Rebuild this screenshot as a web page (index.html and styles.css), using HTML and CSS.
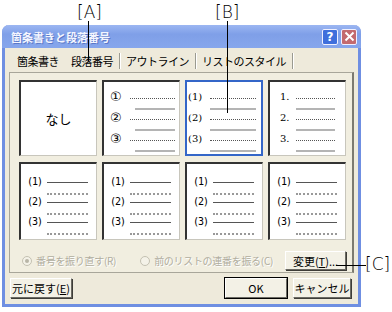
FILE: index.html
```html
<!DOCTYPE html>
<html lang="ja">
<head>
    <meta charset="UTF-8">
    <title>箇条書きと段落番号</title>
    <link rel="stylesheet" href="styles.css">
</head>
<body>

    <div class="dialog">
        <div class="titlebar">
            <span class="title">箇条書きと段落番号</span>
            <span class="tb-btn help">?</span>
            <span class="tb-btn close">
                <svg width="11" height="11" viewBox="0 0 11 11"><path d="M1.5 1.5 L9.5 9.5 M9.5 1.5 L1.5 9.5" stroke="#fff" stroke-width="2"/></svg>
            </span>
        </div>

        <div class="tabs">
            <span class="tab">箇条書き</span>
            <span class="tab active">段落番号</span>
            <span class="tab">アウトライン</span>
            <span class="tab">リストのスタイル</span>
        </div>

        <div class="panel">
            <div class="gallery">
                <div class="cell none">なし</div>

                <div class="cell list circled">
                    <div class="item"><span class="num">①</span><span class="ln"></span><span class="sub"></span></div>
                    <div class="item"><span class="num">②</span><span class="ln"></span><span class="sub"></span></div>
                    <div class="item"><span class="num">③</span><span class="ln"></span><span class="sub"></span></div>
                </div>

                <div class="cell list paren selected">
                    <div class="item"><span class="num">(1)</span><span class="ln"></span><span class="sub"></span></div>
                    <div class="item"><span class="num">(2)</span><span class="ln"></span><span class="sub"></span></div>
                    <div class="item"><span class="num">(3)</span><span class="ln"></span><span class="sub"></span></div>
                </div>

                <div class="cell list period">
                    <div class="item"><span class="num">1.</span><span class="ln"></span><span class="sub"></span></div>
                    <div class="item"><span class="num">2.</span><span class="ln"></span><span class="sub"></span></div>
                    <div class="item"><span class="num">3.</span><span class="ln"></span><span class="sub"></span></div>
                </div>

                <div class="cell list wide">
                    <div class="item"><span class="num">(1)</span><span class="ln"></span><span class="sub"></span></div>
                    <div class="item"><span class="num">(2)</span><span class="ln"></span><span class="sub"></span></div>
                    <div class="item"><span class="num">(3)</span><span class="ln"></span><span class="sub"></span></div>
                </div>

                <div class="cell list wide">
                    <div class="item"><span class="num">(1)</span><span class="ln"></span><span class="sub"></span></div>
                    <div class="item"><span class="num">(2)</span><span class="ln"></span><span class="sub"></span></div>
                    <div class="item"><span class="num">(3)</span><span class="ln"></span><span class="sub"></span></div>
                </div>

                <div class="cell list wide">
                    <div class="item"><span class="num">(1)</span><span class="ln"></span><span class="sub"></span></div>
                    <div class="item"><span class="num">(2)</span><span class="ln"></span><span class="sub"></span></div>
                    <div class="item"><span class="num">(3)</span><span class="ln"></span><span class="sub"></span></div>
                </div>

                <div class="cell list wide">
                    <div class="item"><span class="num">(1)</span><span class="ln"></span><span class="sub"></span></div>
                    <div class="item"><span class="num">(2)</span><span class="ln"></span><span class="sub"></span></div>
                    <div class="item"><span class="num">(3)</span><span class="ln"></span><span class="sub"></span></div>
                </div>
            </div>

            <div class="options">
                <span class="radio checked"></span>
                <span class="opt-label first">番号を振り直す(R)</span>
                <span class="radio"></span>
                <span class="opt-label">前のリストの連番を振る(C)</span>
                <button class="btn change">変更(<u>T</u>)...</button>
            </div>
        </div>

        <div class="footer">
            <button class="btn reset">元に戻す(<u>E</u>)</button>
            <button class="btn ok">OK</button>
            <button class="btn cancel">キャンセル</button>
        </div>
    </div>

    <!-- callouts -->
    <div class="callout label-a">[A]</div>
    <div class="callout-line line-a"></div>
    <div class="callout label-b">[B]</div>
    <div class="callout-line line-b"></div>
    <div class="callout label-c">[C]</div>
    <div class="callout-line line-c"></div>

</body>
</html>
```

FILE: styles.css
```css
body {
    margin: 0;
    width: 392px;
    height: 312px;
    background: #fff;
    position: relative;
    font-family: "Noto Sans CJK JP", "DejaVu Sans", sans-serif;
    font-size: 11px;
    color: #000;
    overflow: hidden;
}

.dialog {
    box-sizing: border-box;
    margin: 25px 0 0 2px;
    width: 359px;
    height: 282px;
    border: 3px solid #6f8fe2;
    border-top: none;
    border-radius: 7px 7px 0 0;
    background: #eeeadb;
    display: flex;
    flex-direction: column;
}

.titlebar {
    height: 23px;
    margin: 0 -3px;
    padding: 0 4px 0 9px;
    border-radius: 7px 7px 0 0;
    background: linear-gradient(#9cb6f2, #7f9fe8 40%, #86a6ec);
    display: flex;
    align-items: center;
    gap: 3px;
}

.title {
    flex: 1;
    color: #f4f6ff;
    font-weight: bold;
    font-size: 11px;
    text-shadow: 1px 1px 0 #5a78c8;
}

.tb-btn {
    box-sizing: border-box;
    width: 16px;
    height: 16px;
    border: 1px solid #f0f0ff;
    border-radius: 2px;
    display: flex;
    align-items: center;
    justify-content: center;
    color: #fff;
    font-weight: bold;
    font-size: 12px;
    font-family: "DejaVu Sans", sans-serif;
}

.help {
    background: #3f6fdc;
}

.close {
    background: #c36a6e;
}

.tabs {
    display: flex;
    height: 22px;
    margin-top: 2px;
    padding-left: 6px;
    align-items: center;
}

.tab {
    padding: 0 6px;
    height: 16px;
    line-height: 16px;
    letter-spacing: -0.5px;
}

.tab.active,
.tab:nth-child(3),
.tab:nth-child(4) {
    border-right: 1px solid #9a9a90;
    box-shadow: 1px 0 0 #fff;
}

.panel {
    box-sizing: border-box;
    height: 201px;
    margin: 0 4px 0 4px;
    border: 1px solid #a8a69a;
    border-right: 2px solid #7c7a70;
    padding: 7px 0 0 9px;
    background: #f1eee0;
}

.gallery {
    display: grid;
    grid-template-columns: repeat(4, 78px);
    grid-template-rows: 76px 78px;
    column-gap: 5px;
    row-gap: 6px;
}

.cell {
    box-sizing: border-box;
    background: #fff;
    border-top: 2px solid #333;
    border-left: 2px solid #333;
    border-right: 1px solid #c8c6bc;
    border-bottom: 1px solid #c8c6bc;
}

.cell.none {
    display: flex;
    align-items: center;
    justify-content: center;
    font-size: 13px;
}

.cell.selected {
    border: 2px solid #3466c8;
}

.list {
    padding: 9px 4px 0 6px;
}

.item {
    display: grid;
    grid-template-columns: 14px 1fr;
    column-gap: 6px;
    height: 21px;
}

.num {
    font-family: "DejaVu Serif", serif;
    font-size: 10px;
    line-height: 12px;
    color: #000;
}

.ln {
    align-self: center;
    border-top: 1px dotted #555;
}

.sub {
    grid-column: 2;
    margin: 3px 0 0 5px;
    border-top: 2px solid #b4b4b4;
}

.circled .num {
    font-family: "DejaVu Sans", sans-serif;
    font-size: 13px;
    line-height: 12px;
}

.paren {
    padding: 9px 5px 0 1px;
}

.paren .item {
    grid-template-columns: 18px 1fr;
    column-gap: 4px;
}

.paren .sub {
    margin-left: 0;
}

.period {
    padding: 9px 10px 0 10px;
}

.period .item {
    grid-template-columns: 12px 1fr;
    column-gap: 4px;
}

.period .sub {
    margin-left: 0;
}

.wide {
    padding: 12px 8px 0 6px;
}

.wide .item {
    grid-template-columns: 18px 1fr;
    column-gap: 2px;
    height: 20px;
}

.wide .num {
    font-family: "DejaVu Sans Mono", monospace;
    font-size: 10px;
    letter-spacing: -1px;
}

.wide .ln {
    border-top: 1px solid #555;
}

.wide .sub {
    margin-left: 0;
    border-top: 2px dotted #999;
}

.options {
    display: flex;
    align-items: center;
    height: 19px;
    margin-top: 11px;
    padding-left: 3px;
    color: #b0ad9e;
    white-space: nowrap;
}

.radio {
    flex: none;
    box-sizing: border-box;
    width: 10px;
    height: 10px;
    border: 1px solid #c4c1b2;
    border-radius: 50%;
    background: #f4f2e8;
    margin-right: 4px;
    display: flex;
    align-items: center;
    justify-content: center;
}

.radio.checked::after {
    content: "";
    width: 4px;
    height: 4px;
    border-radius: 50%;
    background: #b8b5a6;
}

.opt-label {
    font-size: 10px;
    letter-spacing: -0.3px;
    text-shadow: 1px 1px 0 #fff;
}

.opt-label.first {
    margin-right: 24px;
}

.btn {
    box-sizing: border-box;
    height: 19px;
    padding: 0;
    background: #f3f1e6;
    border: 1px solid #fff;
    border-right-color: #6b6a63;
    border-bottom-color: #6b6a63;
    box-shadow: 1px 1px 0 #3e3d38;
    font-family: "Noto Sans CJK JP", sans-serif;
    font-size: 11px;
    color: #000;
    line-height: 16px;
    white-space: nowrap;
}

.btn u {
    text-decoration: underline;
}

.change {
    width: 61px;
    margin-left: auto;
    margin-right: 6px;
}

.footer {
    display: flex;
    margin-top: 5px;
    padding: 0 7px 0 5px;
    gap: 6px;
}

.reset {
    width: 62px;
    height: 20px;
}

.ok {
    width: 62px;
    height: 20px;
    margin-left: auto;
    outline: 1px solid #000;
}

.cancel {
    width: 58px;
    height: 20px;
}

.callout {
    position: absolute;
    font-family: "DejaVu Sans", sans-serif;
    font-size: 17px;
    font-weight: 300;
    line-height: 18px;
}

.callout-line {
    position: absolute;
    background: #000;
}

.label-a {
    left: 77px;
    top: 3px;
}

.line-a {
    left: 88px;
    top: 21px;
    width: 1px;
    height: 40px;
}

.label-b {
    left: 215px;
    top: 3px;
}

.line-b {
    left: 227px;
    top: 21px;
    width: 1px;
    height: 92px;
}

.label-c {
    left: 365px;
    top: 255px;
}

.line-c {
    left: 336px;
    top: 265px;
    width: 30px;
    height: 1px;
}
```
